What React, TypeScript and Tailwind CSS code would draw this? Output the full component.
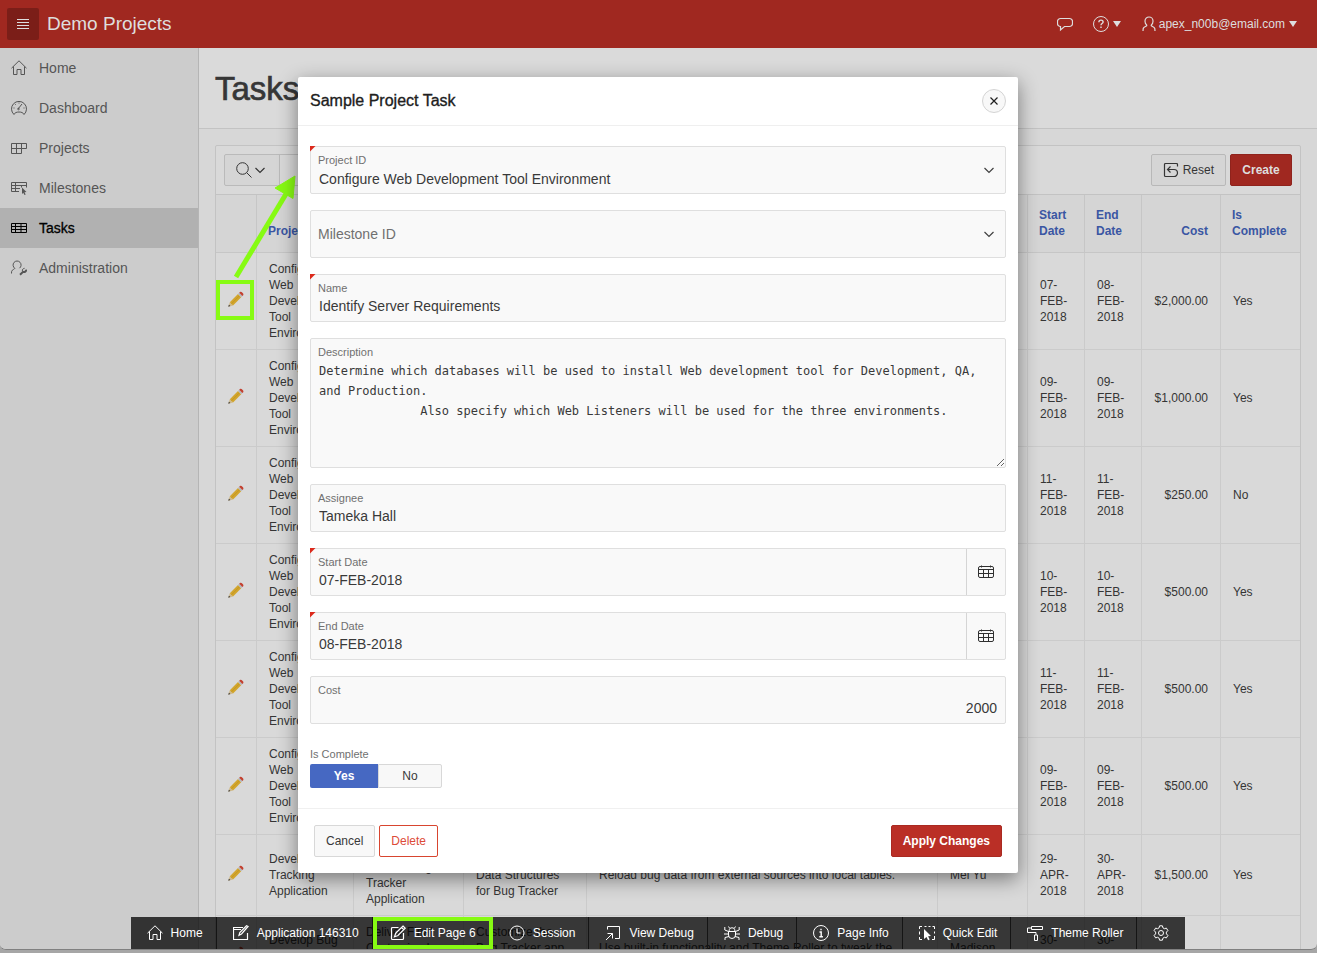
import type { ReactNode } from 'react';

const paths: Record<string, ReactNode> = {
  home: <path d="M.5 8.2 8 .8l7.500 7.400M2.500 6.500v8h3.500V9.500h4v5h3.500v-8" />,
  gauge: (
    <>
      <path d="M3 14.500a7.500 7.500 0 1 1 10 0c-.8-1.800-2.500-2.500-5-2.500s-4.200.7-5 2.500Z" />
      <path d="m7 9 4-5M8 2.500v1M2.500 8h1M12.500 8h1M4.200 4.200l.7.7" />
      <circle cx="7.500" cy="9" r=".8" />
    </>
  ),
  projects: <path d="M.5 3.500h15v5h-5v5H.5zM.5 8.500h10M5.500 3.500v10M10.500 3.500v5" />,
  milestones: (
    <>
      <path d="M8 11.500H.5v-9h15v5M.5 5.500h15M.5 8.500H9M4.500 2.500v9M10.500 5.500v2" />
      <path d="m11 7.500 4.500 4.500-2 .2 1.200 2.300-1.200.6-1.200-2.300-1.300 1.300Z" fill="currentColor" stroke="none" />
    </>
  ),
  tasks: <path d="M.5 3.500h15v9H.5zM.5 6.500h15M.5 9.500h15M4.500 3.500v9M10 3.500v9" />,
  admin: (
    <>
      <path d="M3.800 8.300A4 4 0 1 1 8.500 8.200M3.800 8.300c-.2 1.200-2.500.9-3.200 3.200l-.1 2" />
      <path d="M15.200 9.500a2.300 2.300 0 0 1-3.200 2.400L9 14.800" strokeWidth="2" />
      <path d="M13.600 8.300a2.200 2.200 0 0 0-2.200 2.700" />
    </>
  ),
  menu: <path d="M2 3.500h12M2 6.500h12M2 9.500h12M2 12.500h12" />,
  chat: <path d="M3.500 2.500h9a3 3 0 0 1 3 3v2a3 3 0 0 1-3 3H7.500l-4 3.500V10.500a3 3 0 0 1-3-3v-2a3 3 0 0 1 3-3Z" strokeWidth="1.200" />,
  help: (
    <>
      <circle cx="8" cy="8" r="7.500" />
      <path d="M5.900 6.200c0-1.400.9-2.100 2.100-2.100s2.100.8 2.100 1.900c0 1.500-2.100 1.600-2.100 3.200M8 10.600v1.300" strokeWidth="1.400" />
    </>
  ),
  user: <path d="M6 9.200C3.900 8.200 4 6.500 4 5a4 4 0 0 1 8 0c0 1.500.1 3.200-2 4.200M6 9.200c-.2 1.500-3 1-3.800 3.300l-.2 2.500M10 9.200c.2 1.500 3 1 3.800 3.300l.2 2.500" strokeWidth="1.200" />,
  search: (
    <>
      <circle cx="6.500" cy="6.500" r="5.800" />
      <path d="m10.700 10.700 4.800 4.800" />
    </>
  ),
  chevron: <path d="m3.500 6 4.500 4.500L12.500 6" strokeWidth="1.200" />,
  reset: (
    <>
      <path d="M14.500 4.500V2.500a1 1 0 0 0-1-1h-11a1 1 0 0 0-1 1v11a1 1 0 0 0 1 1h8.500a3.500 3.500 0 0 0 0-7H5" strokeWidth="1.200" />
      <path d="M7.500 4.500 4.500 7.500l3 3" strokeWidth="1.200" />
    </>
  ),
  calendar: (
    <path d="M2 2.500h12a1.500 1.500 0 0 1 1.500 1.500v8a1.500 1.500 0 0 1-1.500 1.500H2A1.500 1.500 0 0 1 .5 12V4A1.500 1.500 0 0 1 2 2.500ZM.5 5.500h15M.5 9.500h15M5.500 5.500v8M10.500 5.500v8M3.500 1.500v2M12.500 1.500v2" />
  ),
  close: <path d="m4 4 8 8M12 4l-8 8" strokeWidth="1.400" />,
  application: <path d="M10 2.500H.5v12h14V8M.5 4.500H8M15 1.500 8.500 9l-2.500 1.300.8-2.700L13.500.8Z" strokeWidth="1.200" />,
  edit: <path d="M8.500 2.500h-6a1 1 0 0 0-1 1v10a1 1 0 0 0 1 1h10a1 1 0 0 0 1-1V8M13 1l2.200 2.200L8 10.500l-3.500 1.200 1.200-3.500ZM11.500 2.500l2.200 2.200" strokeWidth="1.200" />,
  session: (
    <>
      <circle cx="8" cy="8" r="7" />
      <path d="M8 3.500V8h3.500" />
    </>
  ),
  viewDebug: <path d="M2.500 4.500V1.500h12v12H10M1 15l6.500-6.500M2.500 8.500h5V13.500" />,
  debug: (
    <path d="M4.500 6.500h7v3.500a3.500 3.500 0 0 1-7 0ZM5 6.500C5 3.500 6.500 2.800 8 2.800s3 .7 3 3.700M5.800 3.500 4.500 1.500M10.200 3.500l1.300-2M4.500 6.500.8 5V2M11.500 6.500 15.200 5V2M0 9h4.500M11.500 9H16M5 11.500 1 12.500v2.500M11 11.500l4 1v2.500" />
  ),
  info: (
    <>
      <circle cx="8" cy="8" r="7.500" />
      <path d="M6.500 7h1.700v4.500M6.300 11.800h3.600M8 3.800v1.400" strokeWidth="1.400" />
    </>
  ),
  quickEdit: (
    <>
      <path d="M.5 4V1.500H3M5.500 1.500h2M9.500 1.500h2M13.500 1.500h2V4M15.500 6.500v2M15.500 11v3.500H13M3 14.500H.5V12M.5 9.500v-3" />
      <path d="m5 4 7 7-2.900.2 1.600 3.300-1.600.8-1.600-3.400L5 14Z" fill="currentColor" stroke="none" />
    </>
  ),
  roller: <path d="M4.500 1.500h11v3h-11zM4.500 3h-4v4.500h8.500V10M7.500 10h3v5.500h-3z" />,
  gear: (
    <>
      <circle cx="8" cy="8" r="2.500" />
      <path d="m6.600.8 2.800 0 .5 2 1.500.9 2-.6 1.500 2.500-1.500 1.500v1.800l1.500 1.500-1.500 2.500-2-.6-1.500.9-.5 2H6.600l-.5-2-1.500-.9-2 .6-1.500-2.500 1.500-1.500V7.100L1.100 5.600l1.500-2.500 2 .6 1.500-.9Z" />
    </>
  ),
};

function Icon({ name, className = 'size-4' }: { name: string; className?: string }) {
  return (
    <svg viewBox="0 0 16 16" className={`${className} shrink-0`} fill="none" stroke="currentColor" strokeWidth="1" aria-hidden="true">
      {paths[name]}
    </svg>
  );
}

function Caret() {
  return (
    <svg viewBox="0 0 8 6" className="h-1.5 w-2 shrink-0" fill="currentColor" aria-hidden="true">
      <path d="M0 0h8L4 6Z" />
    </svg>
  );
}

function Pencil() {
  return (
    <svg viewBox="0 0 16 16" className="size-4" aria-hidden="true">
      <path d="M.3 15.700 1.800 11.200 5 14.400Z" fill="#cfb98a" />
      <path d="m.3 15.700.6-2 1.400 1.400Z" fill="#333" />
      <path d="M1.800 11.200 10 3l3.200 3.200-8.200 8.200Z" fill="#d2a52c" />
      <path d="m3.300 12.900 8.300-8.300" stroke="#b98d1c" strokeWidth=".6" />
      <path d="m10 3 1.200-1.200 3.200 3.200-1.200 1.200Z" fill="#b5b8bd" />
      <path d="m11.200 1.800.8-.8c1.200-1 4.300 1.800 3.200 3.200l-.8.800Z" fill="#c3402f" />
    </svg>
  );
}

const nav = [
  ['home', 'Home'],
  ['gauge', 'Dashboard'],
  ['projects', 'Projects'],
  ['milestones', 'Milestones'],
  ['tasks', 'Tasks'],
  ['admin', 'Administration'],
];

type Row = {
  project: string;
  milestone?: string;
  task?: string;
  description?: string;
  assignee?: string;
  start: string;
  end: string;
  cost: string;
  complete: string;
};

const env = 'Configure Web Development Tool Environment';

const rows: Row[] = [
  { project: env, start: '07-FEB-2018', end: '08-FEB-2018', cost: '$2,000.00', complete: 'Yes' },
  { project: env, start: '09-FEB-2018', end: '09-FEB-2018', cost: '$1,000.00', complete: 'Yes' },
  { project: env, start: '11-FEB-2018', end: '11-FEB-2018', cost: '$250.00', complete: 'No' },
  { project: env, start: '10-FEB-2018', end: '10-FEB-2018', cost: '$500.00', complete: 'Yes' },
  { project: env, start: '11-FEB-2018', end: '11-FEB-2018', cost: '$500.00', complete: 'Yes' },
  { project: env, start: '09-FEB-2018', end: '09-FEB-2018', cost: '$500.00', complete: 'Yes' },
  {
    project: 'Develop Bug Tracking Application',
    milestone: 'Deliver Final\nCustom Bug\nTracker\nApplication',
    task: 'Populate\nData Structures\nfor Bug Tracker',
    description: 'Reload bug data from external sources into local tables.',
    assignee: 'Mei Yu',
    start: '29-APR-2018',
    end: '30-APR-2018',
    cost: '$1,500.00',
    complete: 'Yes',
  },
  {
    project: 'Develop Bug Tracking Application',
    milestone: 'Deliver Final\nCustomized\nBug Tracker\nApplication',
    task: 'Customize the\nBug Tracker app\nfor the\nproject team',
    description: 'Use built-in functionality and Theme Roller to tweak the\nlook and feel.',
    assignee: 'Madison\nSmith',
    start: '30-APR-2018',
    end: '30-APR-2018',
    cost: '$250.00',
    complete: 'No',
  },
];

const th = 'border-r border-b border-[#c6c6c6] pt-3 pr-3 pb-[13px] pl-[11px] align-bottom text-left font-bold text-[#3a56a3]';
const td = 'border-r border-b border-[#cbcbcb] px-3 py-2 whitespace-pre-line last:border-r-0';

function TaskTable() {
  return (
    <table className="w-full table-fixed border-separate border-spacing-0 border-t border-[#c3c3c3] text-xs leading-4 text-[#353535]">
      <colgroup>
        <col className="w-[41px]" />
        <col className="w-[97px]" />
        <col className="w-[110px]" />
        <col className="w-[123px]" />
        <col />
        <col className="w-[90px]" />
        <col className="w-[57px]" />
        <col className="w-[57px]" />
        <col className="w-[79px]" />
        <col className="w-[79px]" />
      </colgroup>
      <thead className="bg-[#d5d5d5]">
        <tr>
          <th className={th} />
          <th className={th}>Project</th>
          <th className={th}>Milestone</th>
          <th className={th}>Name</th>
          <th className={th}>Description</th>
          <th className={th}>Assignee</th>
          <th className={th}>Start Date</th>
          <th className={th}>End Date</th>
          <th className={`${th} text-right`}>Cost</th>
          <th className={`${th} border-r-0`}>Is Complete</th>
        </tr>
      </thead>
      <tbody>
        {rows.map((row, i) => (
          <tr key={i}>
            <td className="border-r border-b border-[#cbcbcb]">
              {i === 0 ? (
                <div className="relative flex justify-center">
                  <button aria-label="Edit task" className="pb-1">
                    <Pencil />
                  </button>
                  <div className="pointer-events-none absolute -top-[11px] left-0 h-10 w-[38px] border-4 border-[#87fb13]" />
                  <svg viewBox="0 0 64 104" className="pointer-events-none absolute -top-[115px] left-[17px] h-[104px] w-16 overflow-visible" aria-hidden="true">
                    <path d="M3 101 53 18" stroke="#87fb13" strokeWidth="5" />
                    <path d="M62 0 42 12 60 22.500Z" fill="#87fb13" stroke="#87fb13" />
                  </svg>
                </div>
              ) : (
                <button aria-label="Edit task" className="mx-auto block pb-1">
                  <Pencil />
                </button>
              )}
            </td>
            <td className={td}>{row.project}</td>
            <td className={td}>{row.milestone}</td>
            <td className={td}>{row.task}</td>
            <td className={td}>{row.description}</td>
            <td className={td}>{row.assignee}</td>
            <td className={td}>{row.start}</td>
            <td className={td}>{row.end}</td>
            <td className={`${td} text-right`}>{row.cost}</td>
            <td className={td}>{row.complete}</td>
          </tr>
        ))}
      </tbody>
    </table>
  );
}

function RequiredMark() {
  return <span className="absolute -top-px -left-px size-1.5 bg-[#dc2a1c] [clip-path:polygon(0_0,100%_0,0_100%)]" />;
}

const box = 'relative flex rounded-xs border border-[#dfdfdf] bg-[#f9f9f9]';
const fieldLabel = 'px-[7px] pt-[7px] text-[11px] leading-3 text-[#707070]';
const control = 'w-full min-w-0 bg-transparent px-2 text-sm leading-5 text-[#393939] outline-none';

function TextField({
  id,
  label,
  value,
  required,
  date,
}: {
  id: string;
  label: string;
  value: string;
  required?: boolean;
  date?: boolean;
}) {
  return (
    <div className={`${box} h-12`}>
      {required && <RequiredMark />}
      <div className="flex min-w-0 flex-1 flex-col">
        <label htmlFor={id} className={fieldLabel}>
          {label}
        </label>
        <input id={id} defaultValue={value} className={`${control} mt-0.5`} />
      </div>
      {date && (
        <button aria-label={`Pick ${label}`} className="flex w-[39px] items-center justify-center border-l border-[#d5d5d5] text-[#303030]">
          <Icon name="calendar" />
        </button>
      )}
    </div>
  );
}

function TaskDialog() {
  return (
    <div
      role="dialog"
      aria-labelledby="dialog-title"
      className="pointer-events-auto flex w-[720px] max-w-full flex-col rounded-xs bg-white shadow-[0_6px_20px_rgba(0,0,0,0.45)]"
    >
      <header className="flex h-[49px] items-center justify-between border-b border-[#efefef] px-3">
        <h2 id="dialog-title" className="text-base font-medium text-[#202020] [-webkit-text-stroke:thin]">
          Sample Project Task
        </h2>
        <button aria-label="Close" className="flex size-6 items-center justify-center rounded-full border border-[#d4d4d4] bg-[#f8f8f8] text-[#202020]">
          <Icon name="close" className="size-3.5" />
        </button>
      </header>

      <form className="flex flex-col gap-4 px-3 pt-5 pb-5" onSubmit={(e) => e.preventDefault()}>
        <div className={`${box} h-12`}>
          <RequiredMark />
          <div className="flex flex-1 flex-col">
            <label htmlFor="project" className={fieldLabel}>
              Project ID
            </label>
            <select id="project" className={`${control} mt-[3px] appearance-none`}>
              <option>Configure Web Development Tool Environment</option>
            </select>
          </div>
          <span className="pointer-events-none flex items-center pr-2 text-[#404040]">
            <Icon name="chevron" />
          </span>
        </div>

        <div className={`${box} h-12`}>
          <select aria-label="Milestone ID" className="flex-1 appearance-none bg-transparent px-[7px] text-sm text-[#707070] outline-none">
            <option>Milestone ID</option>
          </select>
          <span className="pointer-events-none flex items-center pr-2 text-[#404040]">
            <Icon name="chevron" />
          </span>
        </div>

        <TextField id="name" label="Name" value="Identify Server Requirements" required />

        <div className={`${box} h-[130px] flex-col`}>
          <label htmlFor="description" className={fieldLabel}>
            Description
          </label>
          <textarea
            id="description"
            className="mt-[3px] w-full flex-1 resize-y overflow-hidden bg-transparent px-2 font-['DejaVu_Sans_Mono',monospace] text-xs leading-5 text-[#393939] outline-none"
            defaultValue={
              'Determine which databases will be used to install Web development tool for Development, QA, and Production.\n              Also specify which Web Listeners will be used for the three environments.'
            }
          />
        </div>

        <TextField id="assignee" label="Assignee" value="Tameka Hall" />
        <TextField id="start" label="Start Date" value="07-FEB-2018" required date />
        <TextField id="end" label="End Date" value="08-FEB-2018" required date />

        <div className={`${box} h-12 flex-col justify-between pb-[5px]`}>
          <label htmlFor="cost" className={fieldLabel}>
            Cost
          </label>
          <input id="cost" defaultValue="2000" className={`${control} text-right`} />
        </div>

        <fieldset className="text-xs leading-4">
          <legend className="contents">
            <span className="block pt-2 pb-1 text-[11px] leading-3 text-[#707070]">Is Complete</span>
          </legend>
          <div className="flex h-6">
            <label className="flex w-[68px] items-center justify-center rounded-l-xs bg-[#4668c2] font-bold text-white">
              <input type="radio" name="complete" defaultChecked className="sr-only" />
              Yes
            </label>
            <label className="flex w-16 items-center justify-center rounded-r-xs border border-[#d8d8d8] bg-[#f8f8f8] text-[#383838]">
              <input type="radio" name="complete" className="sr-only" />
              No
            </label>
          </div>
        </fieldset>
      </form>

      <footer className="flex items-center gap-1 border-t border-[#f0f0f0] p-4 text-xs">
        <button className="h-8 rounded-xs border border-[#d8d8d8] bg-[#f8f8f8] px-[11px] text-[#383838]">Cancel</button>
        <button className="h-8 rounded-xs border border-[#d8452f] bg-white px-[11px] text-[#dd4b39]">Delete</button>
        <button className="ml-auto h-8 rounded-xs border border-[#aa2a21] bg-[#ba2f26] px-[11px] font-bold text-white">Apply Changes</button>
      </footer>
    </div>
  );
}

const devItems = [
  ['home', 'Home'],
  ['application', 'Application 146310'],
  ['edit', 'Edit Page 6'],
  ['session', 'Session'],
  ['viewDebug', 'View Debug'],
  ['debug', 'Debug'],
  ['info', 'Page Info'],
  ['quickEdit', 'Quick Edit'],
  ['roller', 'Theme Roller'],
];

function DeveloperToolbar() {
  return (
    <nav className="flex h-8 bg-black/75 text-xs text-white" aria-label="Developer">
      {devItems.map(([icon, label]) => {
        const marked = label === 'Edit Page 6';
        return (
          <a
            key={label}
            href="#"
            className={
              marked
                ? 'relative flex w-30 items-center justify-center gap-2 whitespace-nowrap'
                : 'flex items-center gap-2 border-r border-[#151515] pr-[13px] pl-4 whitespace-nowrap'
            }
          >
            <Icon name={icon} />
            {label}
            {marked && <span className="pointer-events-none absolute inset-0 border-4 border-[#87fb13]" />}
          </a>
        );
      })}
      <a href="#" aria-label="Settings" className="flex items-center px-4">
        <Icon name="gear" />
      </a>
    </nav>
  );
}

export default function App() {
  return (
    <div className="h-screen overflow-hidden bg-[#a6a6a6] pb-[3px] font-['Liberation_Sans',Arial,sans-serif]">
      <div className="relative flex h-full flex-col overflow-hidden rounded-b-md border-b border-[#808080] bg-[#d7d7d7]">
        <header className="flex h-12 shrink-0 items-center bg-[#a02820] pr-5 pl-[7px] text-[#dedede]">
          <button aria-label="Toggle navigation" className="flex size-8 items-center justify-center rounded-xs bg-[#7b1e18]">
            <Icon name="menu" />
          </button>
          <a href="#" className="ml-2 text-[19px] font-medium">
            Demo Projects
          </a>
          <div className="ml-auto flex items-center text-xs">
            <button aria-label="Feedback" className="mr-5">
              <Icon name="chat" />
            </button>
            <button aria-label="Help" className="mr-5 flex items-center gap-1">
              <Icon name="help" />
              <Caret />
            </button>
            <button className="flex items-center gap-1">
              <Icon name="user" className="-mr-0.5 size-4" />
              <span>apex_n00b@email.com</span>
              <Caret />
            </button>
          </div>
        </header>

        <div className="flex min-h-0 flex-1">
          <nav className="w-[199px] shrink-0 border-r border-[#b5b5b5] bg-[#cccccc] text-sm text-[#555555]">
            {nav.map(([icon, label]) => (
              <a
                key={label}
                href="#"
                className={
                  label === 'Tasks'
                    ? 'flex h-10 items-center gap-3 bg-[#b1b1b1] pl-[11px] text-black [-webkit-text-stroke:thin]'
                    : 'flex h-10 items-center gap-3 pl-[11px]'
                }
              >
                <Icon name={icon} />
                {label}
              </a>
            ))}
          </nav>

          <main className="min-w-0 flex-1 overflow-hidden">
            <div className="flex h-[81px] items-center border-b border-[#c3c3c3] bg-[#dadada] px-4">
              <h1 className="pt-0.5 text-[33px] font-medium text-[#363636] [-webkit-text-stroke:thin]">Tasks</h1>
            </div>
            <div className="p-4">
              <section className="rounded-xs border border-[#c3c3c3] bg-[#d9d9d9]">
                <div className="flex h-12 items-center gap-1 px-2 text-xs text-[#353535]">
                  <button aria-label="Search columns" className="flex h-8 w-14 items-center justify-center rounded-l-xs border border-[#bababa] bg-[#d5d5d5]">
                    <Icon name="search" />
                    <Icon name="chevron" />
                  </button>
                  <input aria-label="Search" className="-ml-[5px] h-8 w-64 border border-[#bababa] bg-[#d9d9d9]" />
                  <button className="ml-auto flex h-8 items-center gap-1 rounded-xs border border-[#b8b8b8] bg-[#d5d5d5] px-[11px]">
                    <Icon name="reset" />
                    Reset
                  </button>
                  <button className="h-8 w-[62px] rounded-xs border border-[#8f231c] bg-[#a02820] font-bold text-[#dedede]">Create</button>
                </div>
                <TaskTable />
              </section>
            </div>
          </main>
        </div>

        <div className="pointer-events-none absolute inset-0 flex items-center justify-center pr-px">
          <TaskDialog />
        </div>
        <div className="absolute inset-x-0 bottom-0 flex justify-center pr-px">
          <DeveloperToolbar />
        </div>
      </div>
    </div>
  );
}
